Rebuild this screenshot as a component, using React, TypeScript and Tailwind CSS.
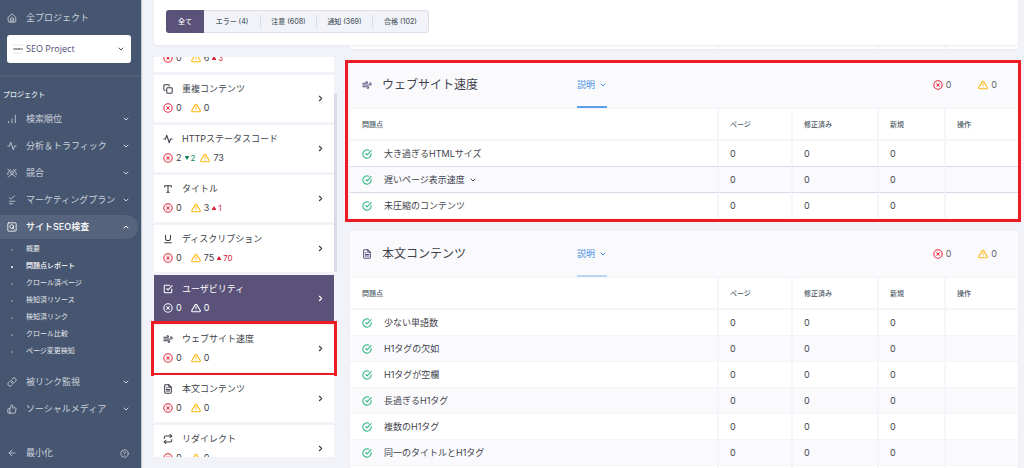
import type { ReactNode } from "react";
import {
  FiActivity,
  FiAlertTriangle,
  FiArrowLeft,
  FiCheckCircle,
  FiCheckSquare,
  FiChevronDown,
  FiChevronRight,
  FiChevronUp,
  FiCopy,
  FiFileText,
  FiHelpCircle,
  FiLink,
  FiRepeat,
  FiThumbsUp,
  FiType,
  FiUnderline,
  FiWind,
  FiXCircle,
} from "react-icons/fi";

function Glyph({ children }: { children: ReactNode }) {
  return (
    <svg
      viewBox="0 0 24 24"
      className="size-[10px]"
      fill="none"
      stroke="currentColor"
      strokeWidth="2"
      strokeLinecap="round"
      strokeLinejoin="round"
    >
      {children}
    </svg>
  );
}

const HomeIcon = () => (
  <Glyph>
    <path d="M3 10l9-8 9 8v10a2 2 0 0 1-2 2H5a2 2 0 0 1-2-2z" />
    <path d="M8 21v-6a4 4 0 0 1 8 0v6M12 15v6" />
  </Glyph>
);

const BarsIcon = () => (
  <Glyph>
    <path d="M4 21v-3M12 21v-9M20 21V3" />
  </Glyph>
);

const PeopleIcon = () => (
  <Glyph>
    <circle cx="12" cy="11" r="3.5" />
    <path d="M2 3l4 4 2-3M22 3l-4 4-2-3" />
    <path d="M6 7l-4 5v4M18 7l4 5v4M3 22l6-6h6l6 6" />
  </Glyph>
);

const ChecklistIcon = () => (
  <Glyph>
    <path d="M5 6l4 4 9-8M6 15h13M6 21h8" />
  </Glyph>
);

const AuditIcon = () => (
  <Glyph>
    <rect x="2" y="2" width="20" height="20" rx="2" />
    <circle cx="11.500" cy="11" r="4.500" />
    <path d="M13 13l4 5" />
  </Glyph>
);

type MenuItem = { label: string; icon: ReactNode; active?: boolean };

const topMenu: MenuItem[] = [
  { label: "検索順位", icon: <BarsIcon /> },
  { label: "分析＆トラフィック", icon: <FiActivity /> },
  { label: "競合", icon: <PeopleIcon /> },
  { label: "マーケティングプラン", icon: <ChecklistIcon /> },
  { label: "サイトSEO検査", icon: <AuditIcon />, active: true },
];

const bottomMenu: MenuItem[] = [
  { label: "被リンク監視", icon: <FiLink /> },
  { label: "ソーシャルメディア", icon: <FiThumbsUp /> },
];

const auditPages = [
  "概要",
  "問題点レポート",
  "クロール済ページ",
  "検知済リソース",
  "検知済リンク",
  "クロール比較",
  "ページ変更検知",
];

const filters = ["全て", "エラー (4)", "注意 (608)", "通知 (369)", "合格 (102)"];

type Category = {
  label: string;
  icon: ReactNode;
  errors: number;
  warnings: number;
  fixed?: number;
  added?: number;
  active?: boolean;
  marked?: boolean;
};

const categories: Category[] = [
  { label: "クロール", icon: <FiCopy />, errors: 0, warnings: 6, added: 3 },
  { label: "重複コンテンツ", icon: <FiCopy />, errors: 0, warnings: 0 },
  { label: "HTTPステータスコード", icon: <FiActivity />, errors: 2, fixed: 2, warnings: 73 },
  { label: "タイトル", icon: <FiType />, errors: 0, warnings: 3, added: 1 },
  { label: "ディスクリプション", icon: <FiUnderline />, errors: 0, warnings: 75, added: 70 },
  { label: "ユーザビリティ", icon: <FiCheckSquare />, errors: 0, warnings: 0, active: true },
  { label: "ウェブサイト速度", icon: <FiWind />, errors: 0, warnings: 0, marked: true },
  { label: "本文コンテンツ", icon: <FiFileText />, errors: 0, warnings: 0 },
  { label: "リダイレクト", icon: <FiRepeat />, errors: 0, warnings: 0 },
];

const speedIssues = ["大き過ぎるHTMLサイズ", "遅いページ表示速度", "未圧縮のコンテンツ"];

const contentIssues = [
  "少ない単語数",
  "H1タグの欠如",
  "H1タグが空欄",
  "長過ぎるH1タグ",
  "複数のH1タグ",
  "同一のタイトルとH1タグ",
  "同一のH1タグ",
];

function MenuLink({ item }: { item: MenuItem }) {
  return (
    <a
      href="#"
      className={`mr-[3px] flex h-6 items-center rounded-r-full pr-2 pl-[7px] ${
        item.active ? "bg-[#56647d] font-medium text-white" : "text-[#ccd2dc]"
      }`}
    >
      <span className="w-[19px] text-[10px]">{item.icon}</span>
      <span className="flex-1 whitespace-nowrap">{item.label}</span>
      {item.active ? (
        <FiChevronUp className="size-2 stroke-3" />
      ) : (
        <FiChevronDown className="size-2 stroke-3" />
      )}
    </a>
  );
}

function Sidebar() {
  return (
    <aside className="z-10 flex w-[141px] shrink-0 flex-col bg-[#475670] text-[9px] text-[#ccd2dc] shadow-[1px_0_1px_#c3c7d0]">
      <a href="#" className="flex h-[35px] items-center pl-[7px]">
        <span className="w-[19px]">
          <HomeIcon />
        </span>
        全プロジェクト
      </a>
      <div className="relative mr-[10px] ml-[7px]">
        <select
          aria-label="プロジェクト"
          className="h-7 w-full appearance-none rounded-[3px] bg-white pl-[19px] font-['Open_Sans','Noto_Sans_CJK_JP',sans-serif] text-[9px] font-medium text-[#4f4d78]"
        >
          <option>SEO Project</option>
        </select>
        <svg viewBox="0 0 10 10" className="pointer-events-none absolute top-[9px] left-[6px] size-[10px]">
          <path d="M0 1h10M0 9h10" stroke="#eee6e4" strokeWidth="1" />
          <path d="M0 5h10" stroke="#b5b3b3" strokeWidth="2" />
          <path d="M2 5h6" stroke="#77716f" strokeWidth="1" strokeDasharray="2 1" />
        </svg>
        <FiChevronDown className="pointer-events-none absolute top-[10px] right-[6px] size-2 stroke-3 text-[#3d4a5f]" />
      </div>
      <div className="mt-3 border-t-2 border-[#52607a]" />
      <h2 className="mt-3 mb-[6px] pl-[3px] text-[7px] leading-3 font-medium text-[#dfe3e9]">
        プロジェクト
      </h2>
      <nav className="flex flex-col gap-[3px]">
        {topMenu.map((item) => (
          <MenuLink key={item.label} item={item} />
        ))}
      </nav>
      <ul className="mt-[2px] text-[7px] text-[#e3e7ec]">
        {auditPages.map((page) => {
          const current = page === "問題点レポート";
          return (
            <li key={page}>
              <a
                href="#"
                className={`flex h-[17px] items-center pl-[11px] ${current ? "font-medium text-white" : ""}`}
              >
                <span
                  className={`mr-[13px] size-[2px] rounded-full ${current ? "bg-white" : "bg-[#8390a3]"}`}
                />
                {page}
              </a>
            </li>
          );
        })}
      </ul>
      <nav className="mt-[10px] flex flex-col gap-[3px]">
        {bottomMenu.map((item) => (
          <MenuLink key={item.label} item={item} />
        ))}
      </nav>
      <div className="mt-auto mb-[3px] flex h-6 items-center pr-3 pl-[7px]">
        <button type="button" className="flex flex-1 items-center">
          <FiArrowLeft className="mr-[9px] size-[10px]" />
          最小化
        </button>
        <button type="button" aria-label="ヘルプ">
          <FiHelpCircle className="size-[9px]" />
        </button>
      </div>
    </aside>
  );
}

function Delta({ value, down }: { value: number; down?: boolean }) {
  return (
    <span className={`ml-[3px] flex items-center gap-[2px] text-[8px] ${down ? "text-[#13885a]" : "text-[#d9263c]"}`}>
      <svg viewBox="0 0 4 4" className="size-1" fill="currentColor">
        <path d={down ? "M0 0h4v1L2 4 0 1z" : "M0 4h4V3L2 0 0 3z"} />
      </svg>
      {value}
    </span>
  );
}

function CategoryCard({ item }: { item: Category }) {
  return (
    <button
      type="button"
      className={`relative flex h-[47px] w-full shrink-0 items-center pr-[9px] pl-[9px] text-left ${
        item.active ? "bg-[#5a5278] text-white" : "bg-white text-[#3b3f4a]"
      }`}
    >
      <span className="flex flex-1 flex-col gap-[5px]">
        <span className="flex h-[14px] items-center text-[10px]">
          <span className="w-[19px] [&>svg]:stroke-[2.5]">{item.icon}</span>
          <span className="text-[9px]">{item.label}</span>
        </span>
        <span className="flex h-[14px] items-center text-[9px]">
          <FiXCircle className={`mr-[3px] size-[10px] stroke-[2.5] ${item.active ? "" : "text-[#e5243a]"}`} />
          {item.errors}
          {item.fixed && <Delta value={item.fixed} down />}
          <FiAlertTriangle
            className={`mr-[3px] size-[10px] stroke-[2.5] ${item.fixed ? "ml-[5px]" : "ml-[9px]"} ${
              item.active ? "" : "text-[#fdb913]"
            }`}
          />
          {item.warnings}
          {item.added && <Delta value={item.added} />}
        </span>
      </span>
      <FiChevronRight className="size-[9px] stroke-3" />
      {item.marked && (
        <span className="pointer-events-none absolute -inset-x-[3px] -inset-y-[4px] border-[3px] border-[#ed1c24]" />
      )}
    </button>
  );
}

function IssueCard({
  title,
  icon,
  issues,
  hovered,
  marked,
}: {
  title: string;
  icon: ReactNode;
  issues: string[];
  hovered?: number;
  marked?: boolean;
}) {
  const head = "border-b-2 border-[#f5f5fa] pt-[2px] font-medium";
  const cell = "border-b border-l-2 border-l-[#f5f5fa] pl-[11px]";
  return (
    <section className="relative shrink-0 rounded-[2px] bg-white text-[9px] shadow-[0_1px_2px_#e6e7ee]">
      <header className="flex h-[47px] items-stretch border-b border-[#f3f3f8] bg-[#fafafd] pr-[21px] pl-3">
        <div className="flex w-[215px] items-center text-[10px] text-[#55507a]">
          <span className="w-5 [&>svg]:stroke-[2.5]">{icon}</span>
          <h2 className="text-[12px] text-[#3f434d]">{title}</h2>
        </div>
        <button
          type="button"
          className={`flex w-[30px] items-center justify-between border-b-2 pt-[2px] text-[#4a90e2] ${
            marked ? "border-[#5b9fe6]" : "border-[#b9d6f5]"
          }`}
        >
          説明
          <FiChevronDown className="size-2 stroke-3" />
        </button>
        <div className="ml-auto flex items-center text-[#5a5f6e]">
          <FiXCircle className="mr-[3px] size-[10px] stroke-[2.5] text-[#e5243a]" />0
          <FiAlertTriangle className="mr-[3px] ml-[27px] size-[10px] stroke-[2.5] text-[#fdb913]" />0
        </div>
      </header>
      <table className="w-full table-fixed border-separate border-spacing-0 text-left text-[#3f434d]">
        <thead className="text-[7px] text-[#4d5b66]">
          <tr className="h-8">
            <th className={`${head} pl-3`}>問題点</th>
            <th className={`${head} w-[74px] border-l-2 pl-[11px]`}>ページ</th>
            <th className={`${head} w-[86px] border-l-2 pl-[11px]`}>修正済み</th>
            <th className={`${head} w-[67px] border-l-2 pl-[11px]`}>新規</th>
            <th className={`${head} w-[74px] border-l-2 pl-[11px]`}>操作</th>
          </tr>
        </thead>
        <tbody>
          {issues.map((issue, i) => {
            const line =
              hovered !== undefined && (i === hovered || i === hovered - 1)
                ? "border-b-[#d9d9e8]"
                : "border-b-[#f3f3f8]";
            return (
              <tr key={issue} className="h-[26px] even:bg-[#fafafd]">
                <td className={`border-b pl-3 ${line}`}>
                  <div className="flex items-center">
                    <FiCheckCircle className="mr-3 size-[10px] stroke-[2.5] text-[#2db582]" />
                    {issue}
                    {i === hovered && <FiChevronDown className="ml-1 size-2 stroke-3" />}
                  </div>
                </td>
                <td className={`${cell} ${line}`}>0</td>
                <td className={`${cell} ${line}`}>0</td>
                <td className={`${cell} ${line}`}>0</td>
                <td className={`${cell} ${line}`} />
              </tr>
            );
          })}
        </tbody>
      </table>
      {marked && (
        <div className="pointer-events-none absolute -top-[2px] -right-[3px] -bottom-[3px] -left-[5px] border-[3px] border-[#ed1c24]" />
      )}
    </section>
  );
}

export default function App() {
  return (
    <div className="flex h-screen overflow-hidden bg-[#f2f3f8] font-['Inter','Noto_Sans_CJK_JP',sans-serif]">
      <Sidebar />
      <main className="flex min-w-0 flex-1 flex-col pr-[6px] pl-[13px]">
        <div className="z-10 flex h-[45px] shrink-0 items-start rounded-b-[3px] bg-white pt-[10px] pl-3 shadow-[0_1px_2px_#e6e7ee]">
          <div className="flex h-[23px] rounded-[3px] border border-[#dcdde8] bg-[#f2f3f8] text-[7px] font-medium text-[#4f6068]">
            {filters.map((filter, i) => (
              <button
                key={filter}
                type="button"
                className={
                  i === 0
                    ? "-my-px -ml-px w-[38px] rounded-l-[3px] bg-[#5a5278] pt-[2px] text-white"
                    : "my-1 w-14 border-l border-[#dcdde8] pt-[2px] nth-2:border-0"
                }
              >
                {filter}
              </button>
            ))}
          </div>
        </div>
        <div className="flex min-h-0 flex-1">
          <div className="relative -ml-[3px] w-[186px] shrink-0 pt-3 pb-[11px]">
            <div className="h-full overflow-hidden pr-[3px] pl-[3px]">
              <div className="-mt-8 flex flex-col gap-[3px]">
                {categories.map((item) => (
                  <CategoryCard key={item.label} item={item} />
                ))}
              </div>
            </div>
            <div className="absolute top-[49px] right-0 h-[178px] w-[3px] bg-[#d9dbe8]" />
          </div>
          <div className="ml-[13px] flex min-w-0 flex-1 flex-col">
            <div className="flex h-1 shrink-0 rounded-b-[2px] bg-white shadow-[0_1px_2px_#e6e7ee]">
              <div className="flex-1" />
              <div className="w-[74px] border-l-2 border-[#f5f5fa]" />
              <div className="w-[86px] border-l-2 border-[#f5f5fa]" />
              <div className="w-[67px] border-l-2 border-[#f5f5fa]" />
              <div className="w-[74px] border-l-2 border-[#f5f5fa]" />
            </div>
            <div className="mt-[13px] flex flex-col gap-3">
              <IssueCard title="ウェブサイト速度" icon={<FiWind />} issues={speedIssues} hovered={1} marked />
              <IssueCard title="本文コンテンツ" icon={<FiFileText />} issues={contentIssues} />
            </div>
          </div>
        </div>
      </main>
    </div>
  );
}
